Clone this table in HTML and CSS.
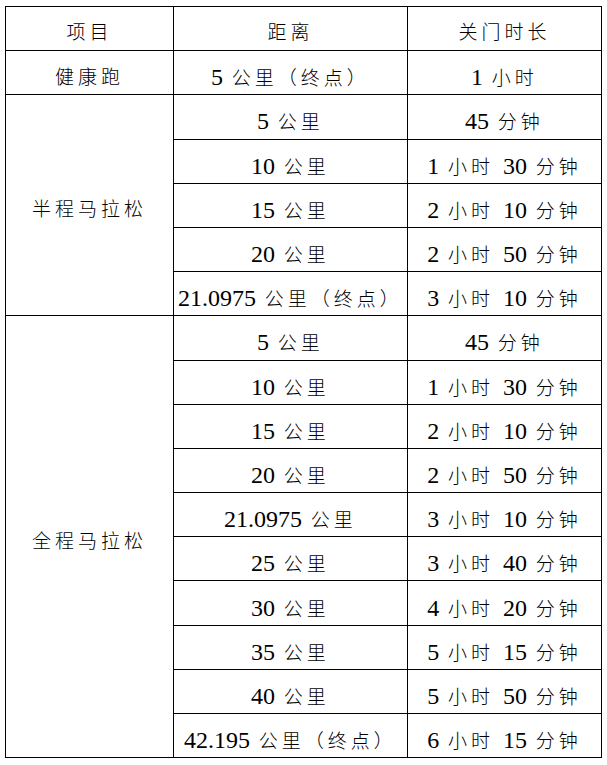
FILE: index.html
```html
<!DOCTYPE html>
<html lang="zh-CN">
<head>
<meta charset="utf-8">
<link rel="stylesheet" href="styles.css">
</head>
<body>
<table class="tbl">
  <colgroup>
    <col class="c1"><col class="c2"><col class="c3">
  </colgroup>
  <tr class="head"><td>项目</td><td>距离</td><td>关门时长</td></tr>
  <tr><td>健康跑</td><td><span class="n">5</span> 公里（终点）</td><td><span class="n">1</span> 小时</td></tr>
  <tr><td rowspan="5" class="grp">半程马拉松</td><td><span class="n">5</span> 公里</td><td><span class="n">45</span> 分钟</td></tr>
  <tr><td><span class="n">10</span> 公里</td><td><span class="n">1</span> 小时 <span class="n">30</span> 分钟</td></tr>
  <tr><td><span class="n">15</span> 公里</td><td><span class="n">2</span> 小时 <span class="n">10</span> 分钟</td></tr>
  <tr><td><span class="n">20</span> 公里</td><td><span class="n">2</span> 小时 <span class="n">50</span> 分钟</td></tr>
  <tr><td><span class="n">21.0975</span> 公里（终点）</td><td><span class="n">3</span> 小时 <span class="n">10</span> 分钟</td></tr>
  <tr><td rowspan="10" class="grp">全程马拉松</td><td><span class="n">5</span> 公里</td><td><span class="n">45</span> 分钟</td></tr>
  <tr><td><span class="n">10</span> 公里</td><td><span class="n">1</span> 小时 <span class="n">30</span> 分钟</td></tr>
  <tr><td><span class="n">15</span> 公里</td><td><span class="n">2</span> 小时 <span class="n">10</span> 分钟</td></tr>
  <tr><td><span class="n">20</span> 公里</td><td><span class="n">2</span> 小时 <span class="n">50</span> 分钟</td></tr>
  <tr><td><span class="n">21.0975</span> 公里</td><td><span class="n">3</span> 小时 <span class="n">10</span> 分钟</td></tr>
  <tr><td><span class="n">25</span> 公里</td><td><span class="n">3</span> 小时 <span class="n">40</span> 分钟</td></tr>
  <tr><td><span class="n">30</span> 公里</td><td><span class="n">4</span> 小时 <span class="n">20</span> 分钟</td></tr>
  <tr><td><span class="n">35</span> 公里</td><td><span class="n">5</span> 小时 <span class="n">15</span> 分钟</td></tr>
  <tr><td><span class="n">40</span> 公里</td><td><span class="n">5</span> 小时 <span class="n">50</span> 分钟</td></tr>
  <tr><td><span class="n">42.195</span> 公里（终点）</td><td><span class="n">6</span> 小时 <span class="n">15</span> 分钟</td></tr>
</table>
</body>
</html>
```
FILE: styles.css
```css
html, body {
  margin: 0;
  padding: 0;
  background: #fff;
}
.tbl {
  margin: 6px 0 0 5px;
  border-collapse: collapse;
  table-layout: fixed;
  width: 596px;
  font-family: "Liberation Serif", "Noto Sans CJK SC", serif;
  font-size: 19px;
  font-weight: 300;
  color: #000;
  text-spacing-trim: space-all;
}
.c1 { width: 168px; }
.c2 { width: 234px; }
.c3 { width: 194px; }
.tbl td {
  border: 1.5px solid #000;
  height: 44.2px;
  padding: 11px 0 0 0;
  box-sizing: border-box;
  text-align: center;
  vertical-align: middle;
  letter-spacing: 4px;
  line-height: 24px;
  white-space: nowrap;
}
.tbl .grp {
  padding-top: 10px;
}
.tbl .head td {
  padding-top: 8px;
}
.n {
  font-size: 24px;
  font-weight: 400;
  letter-spacing: 0;
}
```
